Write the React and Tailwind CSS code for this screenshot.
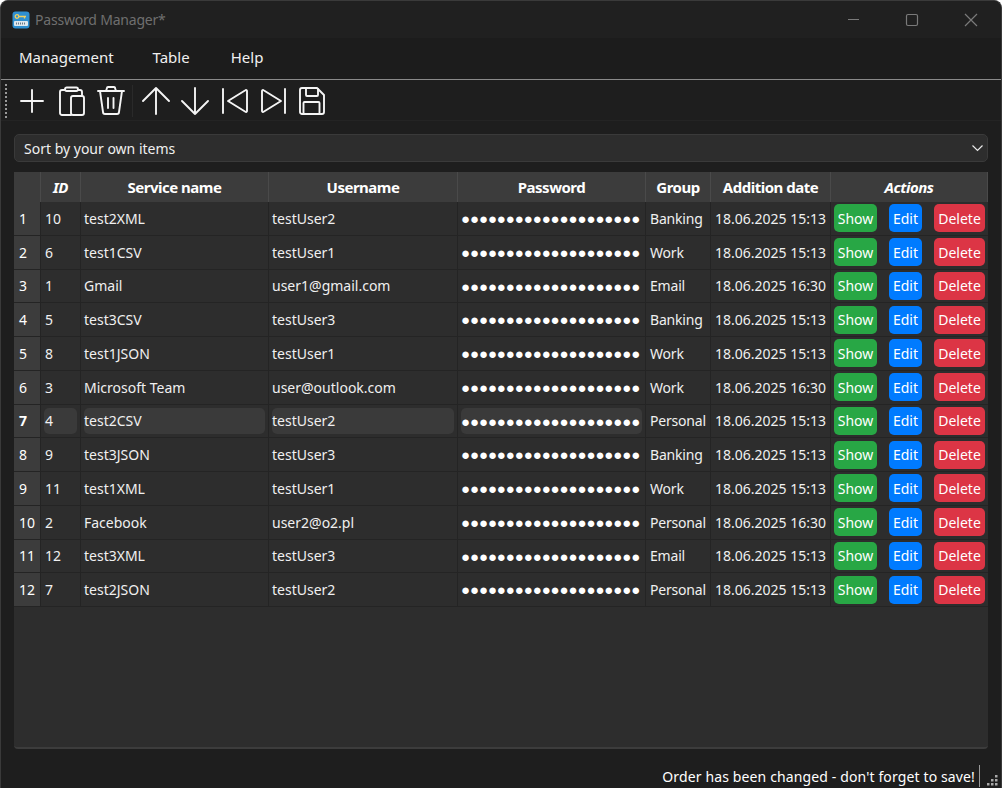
import React from 'react';

const rows = [
  { id: 10, name: 'test2XML', user: 'testUser2', group: 'Banking', date: '18.06.2025 15:13' },
  { id: 6, name: 'test1CSV', user: 'testUser1', group: 'Work', date: '18.06.2025 15:13' },
  { id: 1, name: 'Gmail', user: 'user1@gmail.com', group: 'Email', date: '18.06.2025 16:30' },
  { id: 5, name: 'test3CSV', user: 'testUser3', group: 'Banking', date: '18.06.2025 15:13' },
  { id: 8, name: 'test1JSON', user: 'testUser1', group: 'Work', date: '18.06.2025 15:13' },
  { id: 3, name: 'Microsoft Team', user: 'user@outlook.com', group: 'Work', date: '18.06.2025 16:30' },
  { id: 4, name: 'test2CSV', user: 'testUser2', group: 'Personal', date: '18.06.2025 15:13' },
  { id: 9, name: 'test3JSON', user: 'testUser3', group: 'Banking', date: '18.06.2025 15:13' },
  { id: 11, name: 'test1XML', user: 'testUser1', group: 'Work', date: '18.06.2025 15:13' },
  { id: 2, name: 'Facebook', user: 'user2@o2.pl', group: 'Personal', date: '18.06.2025 16:30' },
  { id: 12, name: 'test3XML', user: 'testUser3', group: 'Email', date: '18.06.2025 15:13' },
  { id: 7, name: 'test2JSON', user: 'testUser2', group: 'Personal', date: '18.06.2025 15:13' },
];

const cols = 'grid grid-cols-[27px_40px_188px_189px_188px_65px_120px_157px]';

const Icon = ({ w = 28, children }) => (
  <svg width={w} height="30" viewBox={`0 0 ${w} 30`} fill="none" stroke="#f4f4f4" strokeWidth="1.9" strokeLinecap="round" strokeLinejoin="round">
    {children}
  </svg>
);

const HeaderCell = ({ children, italic }) => (
  <div className={`flex items-center justify-center border-r border-[#4a4a4a] text-[15px] font-bold tracking-[-0.5px] text-white ${italic ? 'italic' : ''}`}>
    {children}
  </div>
);

const Cell = ({ children, active, inset }) => (
  <div className="border-r border-[#242424] p-[3px]">
    <div className={`flex h-full items-center whitespace-nowrap rounded-[5px] ${inset ? 'pl-[1px]' : ''} ${active ? 'bg-[#3a3a3a]' : ''}`}>{children}</div>
  </div>
);

const Row = ({ row, index }) => {
  const active = index === 6;
  return (
    <div className={`${cols} h-[33.75px] border-b border-[#242424]`}>
      <div className={`flex items-center border-r border-[#242424] bg-[#3c3c3c] pl-[5px] text-white ${active ? 'font-bold' : ''}`}>{index + 1}</div>
      <Cell active={active} inset>{row.id}</Cell>
      <Cell active={active}>{row.name}</Cell>
      <Cell active={active}>{row.user}</Cell>
      <Cell active={active}>
        <span className="text-[15px] tracking-[-0.1px] text-white">{'●'.repeat(20)}</span>
      </Cell>
      <Cell inset><span className="tracking-[-0.2px]">{row.group}</span></Cell>
      <Cell inset>{row.date}</Cell>
      <div className="flex items-center pl-[3px] text-white">
        <button className="flex h-7 w-[43px] items-center justify-center rounded-[5px] bg-[#28a745]">Show</button>
        <button className="ml-3 flex h-7 w-[33px] items-center justify-center rounded-[5px] bg-[#007bff]">Edit</button>
        <button className="ml-3 flex h-7 w-[51px] items-center justify-center rounded-[5px] bg-[#dc3545]">Delete</button>
      </div>
    </div>
  );
};

export default function App() {
  return (
    <div className="flex h-[788px] w-[1002px] flex-col overflow-hidden rounded-t-lg border border-b-0 border-[#3a3a3a] bg-[#1e1e1e] font-['Noto_Sans',sans-serif] text-[14px] text-[#f0f0f0]">
      {/* Title bar */}
      <div className="flex h-[37px] shrink-0 items-center bg-[#202020] pl-[11px]">
        <svg width="18" height="18" viewBox="0 0 18 18">
          <rect x="0.5" y="0.5" width="17" height="17" rx="3" fill="#2f8fd0" />
          <rect x="2" y="10" width="14" height="5" rx="1" fill="#dfe8ee" />
          <path d="M4 12.500h10" stroke="#6a7a88" strokeWidth="2" strokeDasharray="1 1" />
          <circle cx="5" cy="5.500" r="1.800" fill="none" stroke="#f0d060" strokeWidth="1.300" />
          <path d="M6.800 5.500H14M12.500 5.500v2" stroke="#f0d060" strokeWidth="1.300" />
        </svg>
        <span className="ml-[5px] tracking-[-0.2px] text-[#6f6f6f]">Password Manager*</span>
        <div className="ml-auto flex items-center">
          <svg width="182" height="37" viewBox="0 0 182 37" fill="none" stroke="#7a7a7a" strokeWidth="1.2">
            <path d="M29 18.500h11" />
            <rect x="87.500" y="13.500" width="11" height="11" rx="1.500" />
            <path d="M146 13l12 12M158 13l-12 12" />
          </svg>
        </div>
      </div>

      {/* Menu */}
      <div className="flex h-[42px] shrink-0 items-center border-b border-[#8a8a8a] bg-[#1c1c1c] pb-[3px] pl-[18px] text-[15px]">
        <span>Management</span>
        <span className="ml-[39px]">Table</span>
        <span className="ml-[41px]">Help</span>
      </div>

      {/* Toolbar */}
      <div className="flex h-[41px] shrink-0 items-center border-b border-[#242424] bg-[#1e1e1e] pl-[4px] pt-[2px]">
        <div className="h-[34px] border-l-2 border-dotted border-[#9a9a9a]" />
        <div className="ml-[12px] flex items-center">
          <Icon w={26}><path d="M13 4v22M2 15h22" /></Icon>
          <div className="ml-[14px]">
            <Icon w={26}>
              <path d="M12 29H3a2 2 0 0 1-2-2V6a2 2 0 0 1 2-2h3M19 4h2a2 2 0 0 1 2 2v4" />
              <rect x="6" y="1.500" width="13" height="3.500" rx="1.700" />
              <rect x="12" y="10" width="13" height="19" rx="2" />
            </Icon>
          </div>
          <div className="ml-[12px]">
            <Icon w={28}><path d="M1 5h26M9 5l1-3a1 1 0 0 1 1-1h6a1 1 0 0 1 1 1l1 3M3 5l3 21a2 2 0 0 0 2 2h12a2 2 0 0 0 2-2l3-21M11 12v10M16.500 12v10" /></Icon>
          </div>
          <div className="ml-[7px] h-[32px] border-l border-[#2a2a2a]" />
          <div className="ml-[9px]">
            <Icon w={28}><path d="M14 28V2M1 15L14 2l13 13" /></Icon>
          </div>
          <div className="ml-[11px]">
            <Icon w={28}><path d="M14 2v26M1 15l13 13 13-13" /></Icon>
          </div>
          <div className="ml-[12px]">
            <Icon w={27}><path d="M2 3v24M26 5v20a1 1 0 0 1-1.600.8L7 15 24.400 4.200A1 1 0 0 1 26 5z" /></Icon>
          </div>
          <div className="ml-[12px]">
            <Icon w={26}><path d="M25 3v24M2 5v20a1 1 0 0 0 1.600.8L21 15 3.600 4.200A1 1 0 0 0 2 5z" /></Icon>
          </div>
          <div className="ml-[13px]">
            <Icon w={26}>
              <path d="M3 2h15l7 7v17a2 2 0 0 1-2 2H3a2 2 0 0 1-2-2V4a2 2 0 0 1 2-2z" />
              <path d="M7 2v7a1 1 0 0 0 1 1h10a1 1 0 0 0 1-1V3M4.500 28V17a1 1 0 0 1 1-1h14a1 1 0 0 1 1 1v11" />
            </Icon>
          </div>
        </div>
      </div>

      {/* Content */}
      <div className="flex min-h-0 flex-1 flex-col px-[13px] pt-[13px]">
        <div className="flex h-[28px] shrink-0 items-center justify-between rounded-[5px] border border-[#3a3a3a] bg-[#2d2d2d] pl-[9px] pr-[4px]">
          <span>Sort by your own items</span>
          <svg width="11" height="8" viewBox="0 0 11 8" fill="none" stroke="#e8e8e8" strokeWidth="1.2"><path d="M0.500 1.500l5 5 5-5" /></svg>
        </div>

        <div className="mt-[10px] h-[577px] shrink-0 overflow-hidden rounded-b-[4px] border-b-2 border-[#3c3c3c] bg-[#2d2d2d]">
          <div className={`${cols} h-[30px] bg-[#3c3c3c]`}>
            <HeaderCell />
            <HeaderCell italic>ID</HeaderCell>
            <HeaderCell>Service name</HeaderCell>
            <HeaderCell>Username</HeaderCell>
            <HeaderCell>Password</HeaderCell>
            <HeaderCell>Group</HeaderCell>
            <HeaderCell>Addition date</HeaderCell>
            <HeaderCell italic>Actions</HeaderCell>
          </div>
          {rows.map((row, index) => (
            <Row key={row.id} row={row} index={index} />
          ))}
        </div>
      </div>

      {/* Status bar */}
      <div className="flex h-[24px] shrink-0 items-center justify-end pr-[2px] text-white">
        <span className="mr-[4px] tracking-[0.13px]">Order has been changed - don't forget to save!</span>
        <div className="h-[22px] border-l border-[#9a9a9a]" />
        <svg className="ml-[7px] mt-[10px]" width="12" height="12" viewBox="0 0 12 12" fill="#a8a8a8">
          <rect x="8" y="0" width="2.500" height="2.500" /><rect x="4" y="4" width="2.500" height="2.500" /><rect x="8" y="4" width="2.500" height="2.500" />
          <rect x="0" y="8" width="2.500" height="2.500" /><rect x="4" y="8" width="2.500" height="2.500" /><rect x="8" y="8" width="2.500" height="2.500" />
        </svg>
      </div>
    </div>
  );
}
